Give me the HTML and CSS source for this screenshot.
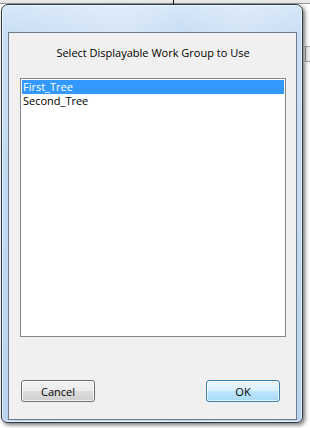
FILE: index.html
```html
<!DOCTYPE html>
<html lang="en">
<head>
  <meta charset="UTF-8" />
  <title>Select Work Group</title>
  <link rel="stylesheet" href="styles.css">
</head>
<body>

<div class="desk">
  <div class="desk-top"></div>
  <div class="desk-line"></div>
  <div class="desk-box"></div>

  <div class="window">
    <div class="client">
      <p class="prompt">Select Displayable Work Group to Use</p>
      <ul class="listbox">
        <li class="selected">First_Tree</li>
        <li>Second_Tree</li>
      </ul>
      <div class="buttons">
        <button class="btn">Cancel</button>
        <button class="btn btn-default">OK</button>
      </div>
    </div>
  </div>
</div>

</body>
</html>
```

FILE: styles.css
```css
body {
  margin: 0;
  font-family: "Open Sans", "Noto Sans", sans-serif;
  font-size: 11px;
  color: #000;
  background-color: #fff;
}

.desk {
  position: relative;
  width: 310px;
  height: 428px;
  overflow: hidden;
  padding-top: 4px;
  box-sizing: border-box;
  background: linear-gradient(#e9e9e9 0, #e9e9e9 4px, #ffffff 4px);
}

/* bits of the window behind the dialog */
.desk-top {
  position: absolute;
  top: 3px;
  left: 0;
  right: 0;
  height: 1px;
  background-color: #9a9a9a;
}

.desk-line {
  position: absolute;
  top: 0;
  left: 173px;
  width: 1px;
  height: 5px;
  background-color: #111;
}

.desk-box {
  position: absolute;
  top: 46px;
  left: 305px;
  width: 20px;
  height: 14px;
  border: 1px solid #a0a0a0;
  background-color: #f0f0f0;
}

.window {
  position: relative;
  margin-left: 1px;
  width: 302px;
  height: 419px;
  box-sizing: border-box;
  padding: 27px 5px 2px 6px;
  border: 1px solid #2e3a44;
  border-radius: 7px 7px 6px 6px;
  background:
    linear-gradient(90deg, rgba(255,255,255,0) 0, rgba(255,255,255,0.25) 40%, rgba(255,255,255,0) 60%, rgba(255,255,255,0.2) 80%, rgba(255,255,255,0) 100%),
    linear-gradient(#d6e7f9 0, #c9def4 28px, #b9d4ef 100%);
  box-shadow: 2px 2px 4px rgba(0,0,0,0.55), inset 0 0 0 1px rgba(255,255,255,0.6);
}

.client {
  height: 100%;
  box-sizing: border-box;
  border: 1px solid #6f7c89;
  background-color: #f0f0f0;
  display: flex;
  flex-direction: column;
  padding: 0 10px 17px 11px;
}

.prompt {
  margin: 12px 0 0;
  text-align: center;
  line-height: 15px;
}

.listbox {
  list-style-type: none;
  margin: 18px 0 0;
  padding: 1px;
  height: 259px;
  box-sizing: border-box;
  border: 1px solid #828790;
  background-color: #fff;
}

.listbox li {
  height: 14px;
  line-height: 13px;
  padding-left: 1px;
}

.listbox li.selected {
  background-color: #3399ff;
  color: #fff;
}

.buttons {
  margin-top: auto;
  display: flex;
  justify-content: space-between;
  padding: 0 6px 0 1px;
}

.btn {
  width: 74px;
  height: 22px;
  font-family: inherit;
  font-size: 11px;
  color: #000;
  border: 1px solid #707070;
  border-radius: 3px;
  background: linear-gradient(#f2f2f2 0, #ebebeb 50%, #dddddd 50%, #cfcfcf 100%);
  box-shadow: inset 0 0 0 1px rgba(255,255,255,0.7);
  padding: 0;
}

.btn-default {
  border-color: #3c7fb1;
  background: linear-gradient(#eaf6fd 0, #d9f0fc 50%, #bee6fd 50%, #a7d9f5 100%);
}
```
